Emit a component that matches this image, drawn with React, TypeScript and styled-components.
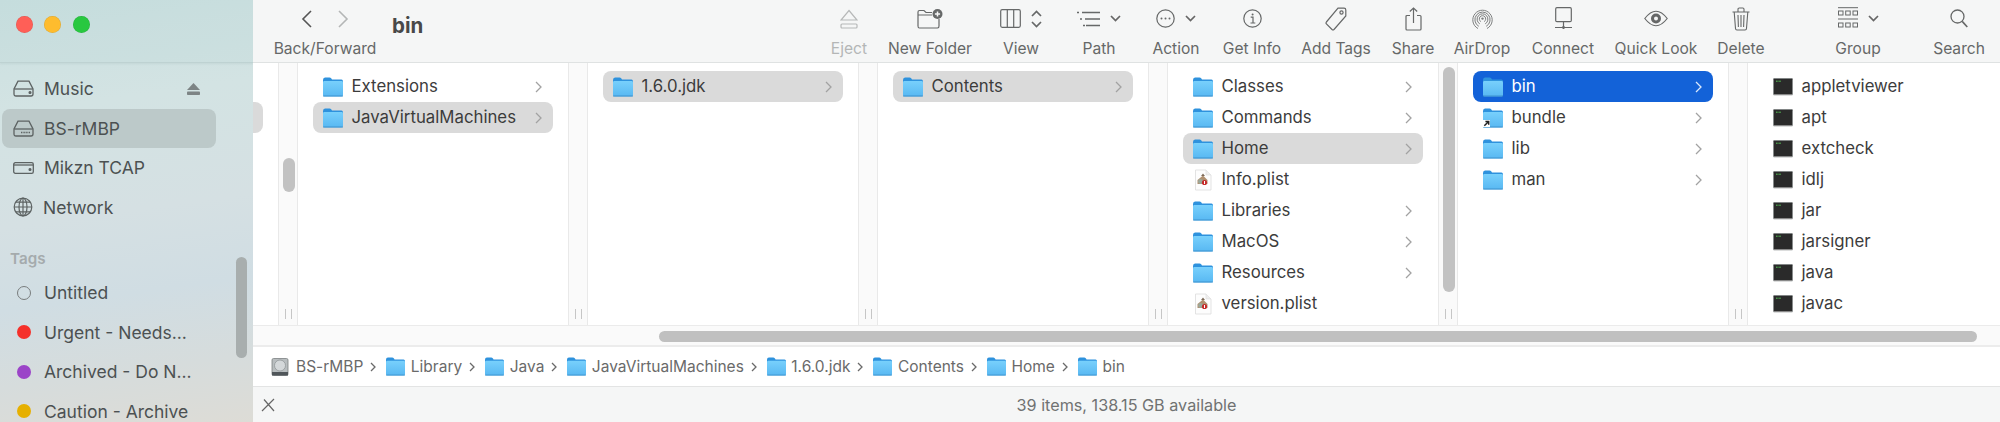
import React from "react";
import styled, { createGlobalStyle } from "styled-components";

const Global = createGlobalStyle`
  html, body { margin: 0; padding: 0; background: #fff; }
  body { font-family: Inter, "Noto Sans", "Liberation Sans", sans-serif; -webkit-font-smoothing: antialiased; }
  * { box-sizing: border-box; }
`;

const Window = styled.div`
  width: 2000px; height: 422px; display: flex; overflow: hidden; background: #fff;
`;
const Sidebar = styled.aside`
  width: 253px; height: 422px; flex: none; position: relative; overflow: hidden;
  background: linear-gradient(172deg, #c9e0e0 0%, #d3e3e3 25%, #d5e0e3 50%, #d0dde3 68%, #d6dcdc 85%, #dddcd6 100%);
`;
const Lights = styled.div`
  height: 63px; display: flex; align-items: center; gap: 11.5px; padding: 0 0 13px 15.5px;
  background: rgba(170,205,205,0.12); border-bottom: 1px solid #bed2d2; box-shadow: 0 1px 2px rgba(120,150,150,.15);
`;
const Light = styled.span<{ $c: string }>`
  width: 17px; height: 17px; border-radius: 50%; background: ${p => p.$c}; box-shadow: inset 0 0 0 .5px rgba(0,0,0,.12);
`;
const SideList = styled.div`padding-top: 6px;`;
const SideRow = styled.div<{ $active?: boolean }>`
  height: 39.5px; margin: 0 37px 0 2px; padding-left: 11px; display: flex; align-items: center; gap: 10px;
  border-radius: 8px; font-size: 17.5px; color: #4c5152; position: relative; white-space: nowrap;
  background: ${p => (p.$active ? "#bcc9c9" : "transparent")};
  & > svg { flex: none; }
`;
const SideHead = styled.div`
  height: 46px; padding: 22px 0 0 10px; font-size: 15.2px; font-weight: 600; color: #a5abad;
`;
const TagDot = styled.span<{ $c?: string }>`
  width: 14px; height: 14px; border-radius: 50%; margin: 0 3px 0 4px; flex: none;
  background: ${p => p.$c || "transparent"}; border: ${p => (p.$c ? "none" : "1.5px solid #787c7d")};
`;
const EjectMark = styled.svg`position: absolute; right: 16px; top: 14px;`;
const SideThumb = styled.div`
  position: absolute; left: 236px; top: 257px; width: 11px; height: 101px; border-radius: 6px; background: #a8aeae;
`;

const Main = styled.main`flex: 1; min-width: 0; display: flex; flex-direction: column; height: 422px;`;
const Toolbar = styled.header`
  height: 63px; flex: none; display: flex; background: #f5f6f6; border-bottom: 1px solid #dfe2e2; padding-right: 11px;
`;
const NavTool = styled.div`
  width: 140px; margin-left: 2px; display: flex; flex-direction: column; align-items: center;
`;
const NavIcons = styled.div`height: 38px; display: flex; align-items: center; gap: 26px; padding-bottom: 1px;`;
const Title = styled.h1`
  margin: 13px 0 0 -3px; padding-left: 0; font-size: 20.5px; line-height: 26px; font-weight: 700; color: #484848;
`;
const Spacer = styled.div`flex: 1;`;
const Tool = styled.div<{ $gap: number; $off?: boolean }>`
  width: 60px; margin-left: ${p => p.$gap}px; flex: none; display: flex; flex-direction: column; align-items: center;
  color: ${p => (p.$off ? "#b4b6b6" : "#666868")};
`;
const ToolIcon = styled.div`height: 38px; padding-bottom: 1px; display: flex; align-items: center; justify-content: center; gap: 10px; white-space: nowrap;`;
const ToolLabel = styled.div`font-size: 15.6px; line-height: 22px; white-space: nowrap;`;
const NavLabel = styled(ToolLabel)`color: #666868;`;

const Columns = styled.section`height: 262px; flex: none; display: flex;`;
const Col = styled.div<{ $w: number; $clip?: boolean }>`
  width: ${p => p.$w}px; flex: none; padding: 8px 15px 0; overflow: hidden; background: #fff;
  display: flex; flex-direction: column; align-items: ${p => (p.$clip ? "flex-end" : "stretch")};
  ${p => p.$clip && "padding-left: 0;"}
`;
const Strip = styled.div`
  width: 20px; flex: none; position: relative; background: #fafafa;
  border-left: 1px solid #e9e9e9; border-right: 1px solid #e9e9e9;
`;
const Grip = styled.span`
  position: absolute; left: 6px; bottom: 6px; width: 7px; height: 10px;
  border-left: 1.5px solid #c6c6c6; border-right: 1.5px solid #c6c6c6;
`;
const VThumb = styled.span<{ $top: number; $h: number }>`
  position: absolute; left: 4px; top: ${p => p.$top}px; height: ${p => p.$h}px; width: 12px; border-radius: 6px; background: #c2c2c2;
`;
const Row = styled.div<{ $state?: "gray" | "blue"; $stub?: boolean }>`
  height: 31px; flex: none; display: flex; align-items: center; padding: 0 11px 0 10px; border-radius: 8px;
  font-size: 16.8px; white-space: nowrap; width: ${p => (p.$stub ? "240px" : "auto")};
  color: ${p => (p.$state === "blue" ? "#fff" : "#3c3c3c")};
  background: ${p => (p.$state === "blue" ? "#1362d8" : p.$state === "gray" ? "#dadada" : "transparent")};
  & > svg:first-child { flex: none; margin-right: 8.5px; }
`;
const Name = styled.span`flex: 1; min-width: 0; padding-bottom: 2px;`;

const HBar = styled.div`
  height: 22px; flex: none; background: #fafafa; border-top: 1px solid #ebebeb; border-bottom: 2px solid #ececec;
  padding: 5px 23px 0 406px;
`;
const HThumb = styled.div`height: 11px; border-radius: 6px; background: #c0c0c0;`;
const PathBar = styled.nav`
  height: 39px; flex: none; display: flex; align-items: center; padding-left: 18px; background: #fff;
  font-size: 15.5px; color: #6a6a6a; white-space: nowrap;
`;
const Crumb = styled.span`display: flex; align-items: center; gap: 5.5px;`;
const DiskIcon = styled.svg`margin-right: 1.5px;`;
const Sep = styled.svg`margin: 0 10px 0 7px; flex: none;`;
const Status = styled.footer`
  height: 36px; flex: none; background: #f5f6f6; border-top: 1px solid #e3e4e4; display: flex; align-items: center;
  position: relative; justify-content: center; font-size: 16.2px; color: #707272;
`;
const CloseMark = styled.svg`position: absolute; left: 8px; top: 11px;`;

const Folder = ({ size = 20, alias }: { size?: number; alias?: boolean }) => {
  const id = "f" + size;
  return (
    <svg width={size} height={size} viewBox="0 0 20 20">
      <defs>
        <linearGradient id={id} x1="0" y1="0" x2="0" y2="1">
          <stop offset="0" stopColor="#78d0fc" />
          <stop offset="1" stopColor="#58b8f2" />
        </linearGradient>
      </defs>
      <path d="M0 3 Q0 0.5 2 0.5 H6.5 Q7.6 0.5 8.4 1.6 L9 2.5 H18.5 Q20 2.5 20 4.5 V10 H0Z" fill="#2e92dd" />
      <rect x="0" y="4" width="20" height="15.4" rx="1.4" fill={`url(#${id})`} />
      <rect x="0" y="18.4" width="20" height="1.2" fill="#3a8fc9" opacity=".75" />
      {alias && (
        <g>
          <rect x="0" y="12" width="7" height="7" fill="#fff" />
          <path d="M1.3 17.8 L5.4 13.7 M2.4 13.4 H5.7 V16.7" stroke="#222" strokeWidth="1.5" fill="none" />
        </g>
      )}
    </svg>
  );
};
const Plist = () => (
  <svg width="20" height="22" viewBox="0 0 20 22">
    <path d="M2.5 1 H13 L18 6 V21 H2.5Z" fill="#fdfdfd" stroke="#dcdcdc" strokeWidth=".8" />
    <path d="M13 1 V6 H18" fill="#eee" stroke="#dcdcdc" strokeWidth=".6" />
    <path d="M4.5 11 L10 6.5 L14.5 11 V15 H4.5Z" fill="#b09070" />
    <circle cx="7.5" cy="12.5" r="2.4" fill="#9aa89a" />
    <circle cx="11.5" cy="13.5" r="2.6" fill="#c62a2a" />
    <rect x="11" y="12" width="1" height="3" fill="#fff" />
    <path d="M8 7 L10 4.5 L12 7Z" fill="#7d6a58" />
  </svg>
);
const Terminal = () => (
  <svg width="20" height="18" viewBox="0 0 20 18">
    <rect x=".3" y=".3" width="19.4" height="16.6" rx="1" fill="#2a2a2a" stroke="#aab0b0" strokeWidth=".6" />
    <rect x=".5" y="16" width="19" height="1.4" fill="#aaa" opacity=".6" />
    <path d="M3 3.2 H8" stroke="#58c858" strokeWidth="1" strokeDasharray="1 .4" />
  </svg>
);
const Chev = ({ c = "#a2a2a2" }: { c?: string }) => (
  <svg width="7" height="12" viewBox="0 0 7 12"><path d="M1 1 L6 6 L1 11" stroke={c} strokeWidth="1.3" fill="none" /></svg>
);
const Down = () => (
  <svg width="11" height="7" viewBox="0 0 11 7"><path d="M1 1 L5.5 5.5 L10 1" stroke="#666" strokeWidth="1.7" fill="none" /></svg>
);

const Drive = ({ dots }: { dots?: boolean }) => (
  <svg width="21" height="17" viewBox="0 0 21 17" fill="none" stroke="#5d6363" strokeWidth="1.3">
    <path d="M5 1.2 H16 L20 9 V14 Q20 16 18 16 H3 Q1 16 1 14 V9Z" />
    <path d="M1.2 9 H19.8" />
    {dots ? <path d="M8 12.5 H17" strokeDasharray="1 .6" strokeWidth="1.4" /> : <circle cx="17" cy="12.5" r=".9" fill="#5d6363" />}
  </svg>
);
const Ext = () => (
  <svg width="21" height="12" viewBox="0 0 21 12" fill="none" stroke="#5d6363" strokeWidth="1.3">
    <rect x=".7" y=".7" width="19.6" height="10.6" rx="1.6" />
    <path d="M1 3 H20" /><circle cx="17" cy="7.5" r=".9" fill="#5d6363" />
  </svg>
);
const Globe = () => (
  <svg width="20" height="20" viewBox="0 0 20 20" fill="none" stroke="#5d6363" strokeWidth="1.2">
    <circle cx="10" cy="10" r="8.8" /><ellipse cx="10" cy="10" rx="4" ry="8.8" />
    <path d="M10 1 V19 M1.2 10 H18.8 M2.6 5.2 H17.4 M2.6 14.8 H17.4" />
  </svg>
);

const S = "#666868";
const Ic = {
  eject: <svg width="18" height="20" viewBox="0 0 18 20" fill="none" stroke="#b6b8b8" strokeWidth="1.2"><path d="M9 1.5 L17 11 H1Z" /><rect x="1" y="15" width="16" height="4" rx="1" /></svg>,
  newFolder: <svg width="26" height="20" viewBox="0 0 26 20" fill="none" stroke={S} strokeWidth="1.2"><path d="M1 17 V3 Q1 1.5 2.5 1.5 H7 L9 3.5 H15 M1 6 H15 M22 10 V17 Q22 19 20.5 19 H2.5 Q1 19 1 17" /><circle cx="20.5" cy="5" r="5" fill={S} stroke="none" /><path d="M20.5 2.4 V7.6 M17.9 5 H23.1" stroke="#f5f6f6" strokeWidth="1.5" /></svg>,
  view: <svg width="21" height="19" viewBox="0 0 21 19" fill="none" stroke={S} strokeWidth="1.2"><rect x=".7" y=".7" width="19.6" height="17.6" rx="1.5" /><path d="M7.3 1 V18 M13.7 1 V18" /></svg>,
  step: <svg width="11" height="18" viewBox="0 0 11 18" fill="none" stroke={S} strokeWidth="1.7"><path d="M1 6 L5.5 1.5 L10 6 M1 12 L5.5 16.5 L10 12" /></svg>,
  path: <svg width="23" height="16" viewBox="0 0 23 16" fill="none" stroke={S} strokeWidth="1.3"><path d="M0 1.5 H2 M5 1.5 H23 M3 8 H5 M8 8 H23 M6 14.5 H8 M9 14.5 H23" /></svg>,
  action: <svg width="19" height="19" viewBox="0 0 19 19" fill="none" stroke={S} strokeWidth="1.2"><circle cx="9.5" cy="9.5" r="8.7" /><circle cx="5.5" cy="9.5" r="1" fill={S} stroke="none" /><circle cx="9.5" cy="9.5" r="1" fill={S} stroke="none" /><circle cx="13.5" cy="9.5" r="1" fill={S} stroke="none" /></svg>,
  info: <svg width="19" height="19" viewBox="0 0 19 19" fill="none" stroke={S} strokeWidth="1.2"><circle cx="9.5" cy="9.5" r="8.7" /><path d="M7.7 8.2 H10 V14 M7.5 14 H12.3" /><circle cx="9.6" cy="5.4" r="1" fill={S} stroke="none" /></svg>,
  tag: <svg width="22" height="24" viewBox="0 0 22 24" fill="none" stroke={S} strokeWidth="1.2"><path d="M13 1.2 H19 Q20.8 1.2 20.8 3 V9 L9 22.5 Q8 23.3 7 22.5 L1.4 16.8 Q.6 16 1.4 15Z" /><circle cx="16.5" cy="5.5" r="1.6" /></svg>,
  share: <svg width="17" height="24" viewBox="0 0 17 24" fill="none" stroke={S} strokeWidth="1.2"><path d="M5 8.5 H2 Q1 8.5 1 9.5 V22 Q1 23 2 23 H15 Q16 23 16 22 V9.5 Q16 8.5 15 8.5 H12 M8.5 16 V1 M4.8 4.5 L8.5 1 L12.2 4.5" /></svg>,
  air: <svg width="21" height="22" viewBox="0 0 21 22" fill="none" stroke="#7c7e7e" strokeWidth="1"><path d="M6 20.5 A9.7 9.7 0 1 1 15 20.5" /><path d="M6.8 18.3 A7.6 7.6 0 1 1 14.2 18.3" /><path d="M7.8 15.9 A5.4 5.4 0 1 1 13.2 15.9" /><path d="M8.8 13.6 A3.2 3.2 0 1 1 12.2 13.6" /><circle cx="10.5" cy="10.6" r="1.2" fill="#7c7e7e" stroke="none" /></svg>,
  connect: <svg width="17" height="23" viewBox="0 0 17 23" fill="none" stroke={S} strokeWidth="1.2"><rect x=".7" y=".7" width="15.6" height="14" rx="1.2" /><path d="M8.5 15 V22 M0 20.5 H17" /><circle cx="8.5" cy="20.5" r="1.4" fill={S} stroke="none" /></svg>,
  eye: <svg width="24" height="17" viewBox="0 0 24 17" fill="none" stroke={S} strokeWidth="1.2"><path d="M.8 8.5 Q12 -6 23.2 8.5 Q12 23 .8 8.5Z" /><circle cx="12" cy="8.5" r="5" fill={S} stroke="none" /><circle cx="12" cy="8.5" r="2.6" fill="#f5f6f6" /></svg>,
  trash: <svg width="18" height="24" viewBox="0 0 18 24" fill="none" stroke={S} strokeWidth="1.1"><path d="M.5 5 H17.5 M6 4.5 V2.2 Q6 1 7.2 1 H10.8 Q12 1 12 2.2 V4.5 M2.2 5 L3.5 21.5 Q3.6 23 5 23 H13 Q14.4 23 14.5 21.5 L15.8 5 M6 8 L6.4 20 M9 8 V20 M12 8 L11.6 20" /></svg>,
  group: <svg width="20" height="23" viewBox="0 0 20 23" fill="none" stroke={S} strokeWidth="1"><path d="M0 .7 H20 M0 12 H20" /><rect x=".5" y="4" width="4.5" height="4" /><rect x="7.7" y="4" width="4.5" height="4" /><rect x="15" y="4" width="4.5" height="4" /><rect x=".5" y="16" width="4.5" height="4" /><rect x="7.7" y="16" width="4.5" height="4" /><rect x="15" y="16" width="4.5" height="4" /></svg>,
  search: <svg width="18" height="19" viewBox="0 0 18 19" fill="none" stroke={S} strokeWidth="1.3"><circle cx="7.5" cy="7.5" r="6.5" /><path d="M12.2 12.4 L17.3 18" strokeWidth="1.6" /></svg>,
};

type Item = { n: string; icon?: "plist" | "term" | "alias"; arrow?: boolean; st?: "gray" | "blue" };
const FileRow = ({ it }: { it: Item }) => (
  <Row $state={it.st}>
    {it.icon === "plist" ? <Plist /> : it.icon === "term" ? <Terminal /> : <Folder alias={it.icon === "alias"} />}
    <Name>{it.n}</Name>
    {it.arrow !== false && it.icon !== "plist" && it.icon !== "term" && <Chev c={it.st === "blue" ? "#dbe8fb" : "#a2a2a2"} />}
  </Row>
);

const tools: { n: string; gap: number; off?: boolean; icon: React.ReactNode }[] = [
  { n: "Eject", gap: 0, off: true, icon: Ic.eject },
  { n: "New Folder", gap: 21, icon: Ic.newFolder },
  { n: "View", gap: 31, icon: <>{Ic.view}{Ic.step}</> },
  { n: "Path", gap: 18, icon: <>{Ic.path}<Down /></> },
  { n: "Action", gap: 17, icon: <>{Ic.action}<Down /></> },
  { n: "Get Info", gap: 16, icon: Ic.info },
  { n: "Add Tags", gap: 24, icon: Ic.tag },
  { n: "Share", gap: 17, icon: Ic.share },
  { n: "AirDrop", gap: 9, icon: Ic.air },
  { n: "Connect", gap: 21, icon: Ic.connect },
  { n: "Quick Look", gap: 33, icon: Ic.eye },
  { n: "Delete", gap: 25, icon: Ic.trash },
  { n: "Group", gap: 57, icon: <>{Ic.group}<Down /></> },
  { n: "Search", gap: 41, icon: Ic.search },
];

const cols: Item[][] = [
  [{ n: "Extensions" }, { n: "JavaVirtualMachines", st: "gray" }],
  [{ n: "1.6.0.jdk", st: "gray" }],
  [{ n: "Contents", st: "gray" }],
  [
    { n: "Classes" }, { n: "Commands" }, { n: "Home", st: "gray" }, { n: "Info.plist", icon: "plist" },
    { n: "Libraries" }, { n: "MacOS" }, { n: "Resources" }, { n: "version.plist", icon: "plist" },
  ],
  [{ n: "bin", st: "blue" }, { n: "bundle", icon: "alias" }, { n: "lib" }, { n: "man" }],
];
const files = ["appletviewer", "apt", "extcheck", "idlj", "jar", "jarsigner", "java", "javac"];
const crumbs = ["Library", "Java", "JavaVirtualMachines", "1.6.0.jdk", "Contents", "Home", "bin"];

const Chevron = () => (
  <Sep width="6" height="10" viewBox="0 0 6 10"><path d="M1 1 L5 5 L1 9" stroke="#6a6a6a" strokeWidth="1.3" fill="none" /></Sep>
);

export default function App() {
  return (
    <Window>
      <Global />
      <Sidebar>
        <Lights>
          <Light $c="#ff5f57" /><Light $c="#febc2e" /><Light $c="#28c840" />
        </Lights>
        <SideList>
          <SideRow><Drive />Music
            <EjectMark width="13" height="12" viewBox="0 0 13 12" fill="#7d8485"><path d="M6.5 0 L13 7 H0Z" /><rect y="8.5" width="13" height="3.5" rx=".8" /></EjectMark>
          </SideRow>
          <SideRow $active><Drive dots />BS-rMBP</SideRow>
          <SideRow><Ext />Mikzn TCAP</SideRow>
          <SideRow><Globe />Network</SideRow>
          <SideHead>Tags</SideHead>
          <SideRow><TagDot />Untitled</SideRow>
          <SideRow><TagDot $c="#f5302a" />Urgent - Needs...</SideRow>
          <SideRow><TagDot $c="#9b44c8" />Archived - Do N...</SideRow>
          <SideRow><TagDot $c="#e6b000" />Caution - Archive</SideRow>
        </SideList>
        <SideThumb />
      </Sidebar>
      <Main>
        <Toolbar>
          <NavTool>
            <NavIcons>
              <svg width="11" height="18" viewBox="0 0 11 18"><path d="M10 1 L2 9 L10 17" stroke="#555" strokeWidth="1.6" fill="none" /></svg>
              <svg width="11" height="18" viewBox="0 0 11 18"><path d="M1 1 L9 9 L1 17" stroke="#b4b6b6" strokeWidth="1.6" fill="none" /></svg>
            </NavIcons>
            <NavLabel>Back/Forward</NavLabel>
          </NavTool>
          <Title>bin</Title>
          <Spacer />
          {tools.map(t => (
            <Tool key={t.n} $gap={t.gap} $off={t.off}>
              <ToolIcon>{t.icon}</ToolIcon>
              <ToolLabel>{t.n}</ToolLabel>
            </Tool>
          ))}
        </Toolbar>
        <Columns>
          <Col $w={25} $clip>
            {Array.from({ length: 8 }).map((_, i) => (
              <Row key={i} $stub $state={i === 1 ? "gray" : undefined}>
                <Name /><Chev />
              </Row>
            ))}
          </Col>
          <Strip><VThumb $top={95} $h={34} /><Grip /></Strip>
          {cols.map((c, i) => (
            <React.Fragment key={i}>
              <Col $w={270}>
                {c.map(it => <FileRow key={it.n} it={it} />)}
              </Col>
              <Strip>{i === 3 && <VThumb $top={4} $h={225} />}<Grip /></Strip>
            </React.Fragment>
          ))}
          <Col $w={253}>
            {files.map(n => <FileRow key={n} it={{ n, icon: "term" }} />)}
          </Col>
        </Columns>
        <HBar><HThumb /></HBar>
        <PathBar>
          <Crumb>
            <DiskIcon width="18" height="18" viewBox="0 0 18 18">
              <rect x="1" y="0.5" width="16" height="17" rx="1.5" fill="#b8bdbf" stroke="#7b8082" strokeWidth=".8" />
              <circle cx="9" cy="7.5" r="5.5" fill="#d4d8da" stroke="#8b9092" strokeWidth=".7" />
              <rect x="1" y="14" width="16" height="3.5" fill="#50565a" />
            </DiskIcon>
            BS-rMBP
          </Crumb>
          {crumbs.map(c => (
            <React.Fragment key={c}>
              <Chevron />
              <Crumb><Folder size={19} />{c}</Crumb>
            </React.Fragment>
          ))}
        </PathBar>
        <Status>
          <CloseMark width="14" height="14" viewBox="0 0 14 14"><path d="M1 13 L13 1 M3 1.5 L13 13" stroke="#666" strokeWidth="1.2" fill="none" /></CloseMark>
          39 items, 138.15 GB available
        </Status>
      </Main>
    </Window>
  );
}
